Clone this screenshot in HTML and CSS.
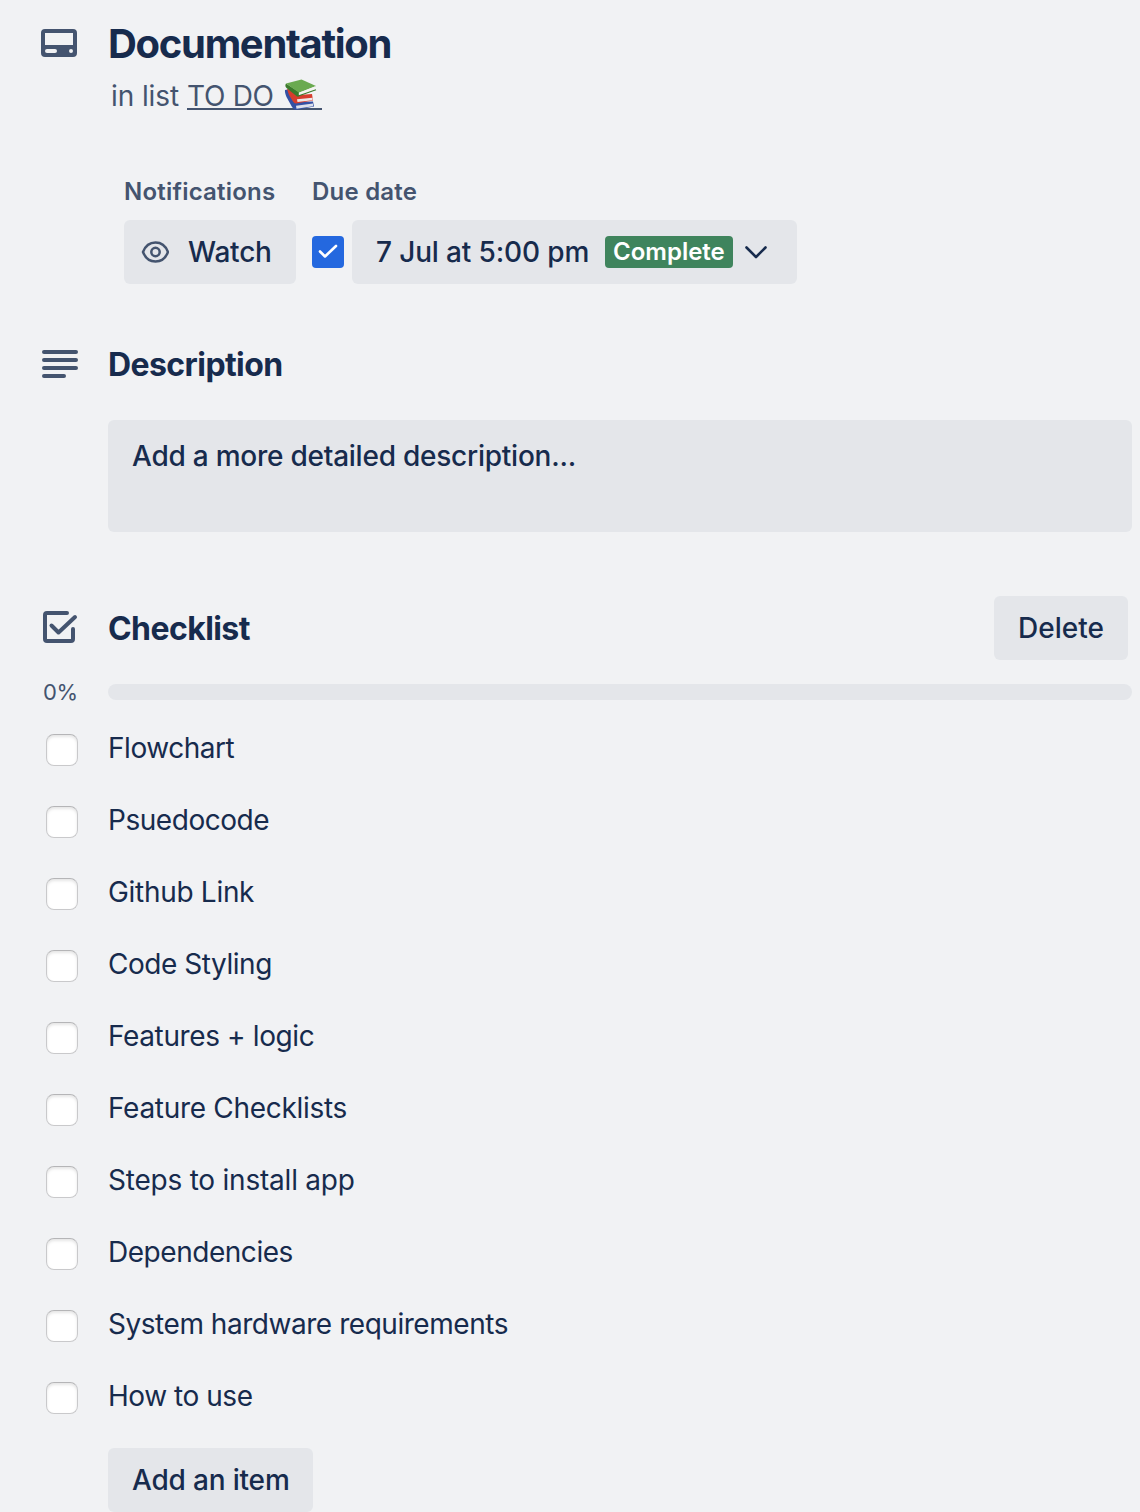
FILE: index.html
```html
<!DOCTYPE html>
<html lang="en">
<head>
<meta charset="utf-8">
<title>Documentation</title>
<link rel="stylesheet" href="styles.css">
</head>
<body>
<main class="card">
  <header class="row header">
    <svg class="icon" width="38" height="30" viewBox="0 0 38 30"><path fill="#44546f" fill-rule="evenodd" d="M5 1h28a4 4 0 0 1 4 4v20a4 4 0 0 1-4 4H5a4 4 0 0 1-4-4V5a4 4 0 0 1 4-4zM5 5v12h28V5zM7 21a2 2 0 0 0 0 4h8a2 2 0 0 0 0-4zM31 21a2 2 0 1 0 0 4a2 2 0 0 0 0-4z"/></svg>
    <h1 class="title">Documentation</h1>
  </header>
  <p class="in-list"><span>in list</span> <a class="list-link"><span>TO DO</span><svg class="books" width="36" height="34" viewBox="0 0 36 34"><path d="M1 12l5-1 6 13 17-.5 1 5L12 32q-2 0-4-3L2.500 19Q.5 14 1 12z" fill="#3450a4"/><path d="M12 27.800l17-2.300v2.800l-16.500 2.500z" fill="#dcdfea"/><path d="M3 11l5 1 7 5 13-1 1 6.500L12 25.500q-2 0-3-2L5 17z" fill="#d63d2e"/><path d="M13 21.300l15.500-1.500v2.500L13.500 24z" fill="#efe9e8"/><path d="M2 5.500Q.5 8 2.500 10L13 18.500l2-.5V14z" fill="#3b7a2c"/><path d="M2 5.500L17.500 1.500L32 8L15 14.800z" fill="#6aaa50"/><path d="M14.800 14.800L31 8.500v3L14.800 17.500z" fill="#f3f3f0"/><path d="M13.500 18.300L32 11.700" stroke="#3b7a2c" stroke-width="1.200"/></svg></a></p>

  <div class="meta">
    <section>
      <h3 class="label">Notifications</h3>
      <button class="btn watch"><svg width="28" height="24" viewBox="0 0 28 24" fill="none" stroke="#44546f" stroke-width="2.500"><path d="M2 12C4.500 5.500 9 2.500 14.500 2.500S24.500 5.500 27 12C24.500 18.500 20 21.500 14.500 21.500S4.500 18.500 2 12z"/><circle cx="14.500" cy="12" r="4.200"/></svg><span>Watch</span></button>
    </section>
    <section>
      <h3 class="label">Due date</h3>
      <div class="due">
        <span class="check-on"><svg width="32" height="32" viewBox="0 0 32 32" fill="none" stroke="#fff" stroke-width="2.600" stroke-linecap="round" stroke-linejoin="round"><path d="M8 15.500l5 5L24 10"/></svg></span>
        <button class="btn date"><span>7 Jul at 5:00 pm</span><span class="badge">Complete</span><svg width="24" height="14" viewBox="0 0 24 14" fill="none" stroke="#172b4d" stroke-width="2.600" stroke-linecap="round" stroke-linejoin="round"><path d="M2.500 2.500l9.500 9.500L21.500 2.500"/></svg></button>
      </div>
    </section>
  </div>

  <div class="row section-head desc-head">
    <svg class="icon" width="38" height="30" viewBox="0 0 38 30" stroke="#44546f" stroke-width="4" stroke-linecap="round"><path d="M4 3h32M4 11h32M4 19h32M4 27h20"/></svg>
    <h2 class="heading">Description</h2>
  </div>
  <div class="description">Add a more detailed description...</div>

  <div class="row section-head list-head">
    <svg class="icon" width="38" height="34" viewBox="0 0 38 34" fill="none" stroke="#44546f" stroke-width="4" stroke-linecap="round" stroke-linejoin="round"><path d="M27 2H7Q5 2 5 4V28Q5 30 7 30H31Q33 30 33 28V18"/><path d="M11.500 14.500L18.500 21.500L35 6"/></svg>
    <h2 class="heading">Checklist</h2>
    <button class="btn delete">Delete</button>
  </div>
  <div class="progress"><span class="percent">0%</span><div class="track"></div></div>
  <ul class="items">
    <li class="item"><span class="box"></span><span>Flowchart</span></li>
    <li class="item"><span class="box"></span><span>Psuedocode</span></li>
    <li class="item"><span class="box"></span><span class="looser">Github Link</span></li>
    <li class="item"><span class="box"></span><span>Code Styling</span></li>
    <li class="item"><span class="box"></span><span class="loose">Features + logic</span></li>
    <li class="item"><span class="box"></span><span class="looser">Feature Checklists</span></li>
    <li class="item"><span class="box"></span><span class="loosest">Steps to install app</span></li>
    <li class="item"><span class="box"></span><span>Dependencies</span></li>
    <li class="item"><span class="box"></span><span>System hardware requirements</span></li>
    <li class="item"><span class="box"></span><span>How to use</span></li>
  </ul>
  <button class="btn add-item">Add an item</button>
</main>
</body>
</html>
```
FILE: styles.css
```css
* { box-sizing: border-box; }
body { margin: 0; background: #f1f2f4; color: #172b4d; font: 420 28px/40px Inter, "Liberation Sans", sans-serif; overflow: hidden; }
h1, h2, h3, p, ul { margin: 0; padding: 0; }
svg { display: block; flex: none; }
.card { width: 1140px; height: 1512px; padding: 20px 8px 0 40px; white-space: nowrap; }
.row { display: flex; align-items: center; }
.icon { margin-right: 30px; }
.header { height: 48px; }
.header .icon { margin-bottom: 2px; }
.title { font-size: 40px; line-height: 48px; font-weight: 650; letter-spacing: -1.3px; }
.in-list { height: 40px; margin: 8px 0 0 71px; display: flex; align-items: center; gap: 8px; color: #44546f; letter-spacing: -.1px; }
.list-link { display: flex; align-items: center; height: 28px; border-bottom: 2px solid #44546f; width: 135px; margin-top: -1px; letter-spacing: -.3px; }
.list-link span { padding-top: 2px; }
.books { margin: -3px 2px -4px auto; }
.meta { display: flex; gap: 16px; margin: 60px 0 0 84px; }
.label { font-size: 24px; line-height: 32px; font-weight: 600; color: #44546f; height: 44px; letter-spacing: .22px; }
.btn { display: flex; align-items: center; height: 64px; border: 0; border-radius: 6px; padding: 0 24px; background: #e4e6ea; color: #172b4d; font: 500 28px/40px Inter, "Liberation Sans", sans-serif; white-space: nowrap; }
.watch { width: 172px; padding: 0 17px; gap: 19px; letter-spacing: -.2px; }
.due { display: flex; align-items: center; gap: 8px; }
.check-on { width: 32px; height: 32px; border-radius: 4px; background: #2468df; }
.date { width: 445px; letter-spacing: -.14px; }
.badge { display: flex; align-items: center; width: 128px; height: 32px; margin: 0 11px 0 auto; padding-left: 8px; border-radius: 4px; background: #3f845d; color: #fff; font-size: 24px; font-weight: 600; letter-spacing: 0; }
.date svg { margin-right: 5px; }
.section-head { height: 64px; }
.desc-head { margin-top: 48px; }
.heading { font-size: 32px; line-height: 40px; font-weight: 650; letter-spacing: -.58px; padding-top: 2px; }
.description { height: 112px; margin-top: 24px; margin-left: 68px; padding: 16px 24px; border-radius: 6px; background: #e4e6ea; font-weight: 500; letter-spacing: -.24px; }
.list-head { margin-top: 64px; }
.delete { width: 134px; margin: 0 4px 0 auto; }
.progress { display: flex; align-items: center; height: 16px; margin-top: 24px; }
.percent { width: 68px; padding-left: 3px; font-size: 22px; color: #44546f; letter-spacing: -.4px; }
.track { flex: 1; height: 16px; border-radius: 8px; background: #e4e6ea; }
.items { list-style: none; margin-top: 12px; letter-spacing: -.46px; }
.item { display: flex; height: 72px; align-items: center; }
.loose { letter-spacing: -.38px; }
.looser { letter-spacing: -.3px; }
.loosest { letter-spacing: -.22px; }
.box { width: 32px; height: 32px; margin: 4px 30px 0 6px; border: 1.5px solid #c9c9cb; border-top-color: #b5b5b7; border-radius: 8px; background: #fff; box-shadow: inset 0 2px 3px rgba(0, 0, 0, .1); }
.add-item { width: 205px; margin: 16px 0 0 68px; letter-spacing: -.18px; }
```
